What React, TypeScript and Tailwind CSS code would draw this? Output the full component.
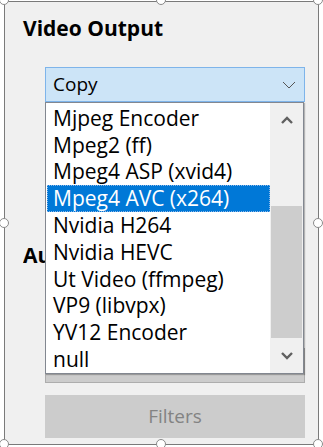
import React from "react";

const items = [
  "Mjpeg Encoder",
  "Mpeg2 (ff)",
  "Mpeg4 ASP (xvid4)",
  "Mpeg4 AVC (x264)",
  "Nvidia H264",
  "Nvidia HEVC",
  "Ut Video (ffmpeg)",
  "VP9 (libvpx)",
  "YV12 Encoder",
  "null",
];

function Handle({ cls }: { cls: string }) {
  return (
    <div
      className={`absolute w-[10px] h-[10px] rounded-full bg-white border border-[#8a8a8a] ${cls}`}
    />
  );
}

export default function App() {
  const font = { fontFamily: '"Open Sans", "Noto Sans", sans-serif' };
  return (
    <div className="relative w-[323px] h-[447px] bg-white overflow-hidden" style={font}>
      <div className="ml-[4px] mt-[1px] w-[315px] h-[444px] border border-[#7a7a7a] bg-[#f0f0f0] flex flex-col pl-[40px] pr-[13px]">
        <div className="-ml-[22px] mt-[13px] text-[21px] leading-[27px] font-bold text-black">
          Video Output
        </div>
        <div className="mt-[25px] h-[35px] border border-[#7eb4ea] bg-[#cce4f7] flex items-center pl-[7px] pr-[7px]">
          <span className="text-[19px] text-black flex-1 leading-none">Copy</span>
          <svg width="14" height="8" viewBox="0 0 14 8" className="mr-[1px]">
            <polyline points="1,1 7,7 13,1" fill="none" stroke="#555" strokeWidth="1" />
          </svg>
        </div>
        <div className="-ml-[22px] mt-[140px] w-[22px] overflow-hidden whitespace-nowrap text-[21px] leading-[27px] font-bold text-black">
          Audio Output
        </div>
        <div className="mt-[79px] h-[35px] border border-[#adadad] bg-[#cccccc]" />
        <button className="mt-[12px] h-[43px] bg-[#cccccc] text-[#838383] text-[19px] flex items-center justify-center">
          Filters
        </button>
      </div>

      {/* dropdown list */}
      <div className="absolute left-[45px] top-[102px] w-[259px] h-[272px] bg-white border border-[#828790] shadow-[1px_1px_1px_rgba(0,0,0,0.25)] flex">
        <div className="flex-1 pt-[2px] pl-[1px]">
          {items.map((t, i) => (
            <div
              key={t}
              className={`h-[26.8px] flex items-center pl-[6px] text-[21px] leading-none whitespace-nowrap ${
                i === 3
                  ? "bg-[#0078d7] text-white outline outline-1 outline-dotted outline-[#8fb8e8] -outline-offset-1"
                  : "text-black"
              }`}
            >
              {t}
            </div>
          ))}
        </div>
        <div className="w-[33px] bg-[#f0f0f0] flex flex-col">
          <div className="h-[33px] flex items-center justify-center">
            <svg width="12" height="8" viewBox="0 0 12 8">
              <polyline points="1,7 6,2 11,7" fill="none" stroke="#606060" strokeWidth="2.4" />
            </svg>
          </div>
          <div className="mt-[70px] h-[132px] mx-[1px] bg-[#cdcdcd]" />
          <div className="flex-1 flex items-center justify-center">
            <svg width="12" height="8" viewBox="0 0 12 8">
              <polyline points="1,1 6,6 11,1" fill="none" stroke="#606060" strokeWidth="2.4" />
            </svg>
          </div>
        </div>
      </div>

      <Handle cls="left-[-1px] top-[-5px]" />
      <Handle cls="left-[156px] top-[-5px]" />
      <Handle cls="left-[313px] top-[-5px]" />
      <Handle cls="left-[-1px] top-[218px]" />
      <Handle cls="left-[313px] top-[218px]" />
      <Handle cls="left-[-1px] top-[439px]" />
      <Handle cls="left-[156px] top-[439px]" />
      <Handle cls="left-[313px] top-[439px]" />
    </div>
  );
}
